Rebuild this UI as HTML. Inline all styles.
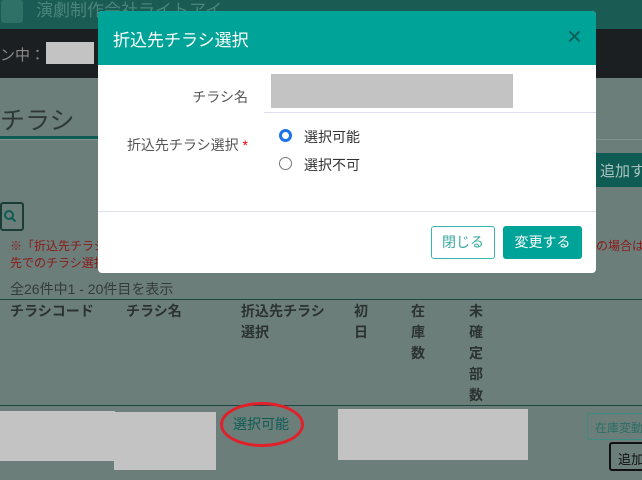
<!DOCTYPE html>
<html><head><meta charset="utf-8"><style>
*{margin:0;padding:0;box-sizing:border-box}
body{width:642px;height:480px;overflow:hidden;position:relative;background:#6b7e79;font-family:"Liberation Sans","Noto Sans CJK JP",sans-serif;color:#2b3230}
.a{position:absolute;white-space:nowrap}
.g{background:#c3c3c3;position:absolute}
</style></head><body>
<div class="a" style="left:0;top:0;width:642px;height:29px;background:#1a5b53"></div>
<div class="a" style="left:1px;top:0;width:22px;height:23px;background:#2f7067;border-radius:3px"></div>
<div class="a" style="left:36px;top:-4px;font-size:17px;color:#4a857c">演劇制作会社ライトアイ</div>
<div class="a" style="left:0;top:29px;width:642px;height:49px;background:#1b1f21"></div>
<div class="a" style="left:0;top:44px;font-size:15px;color:#8a8a8a">ン中：[</div>
<div class="g" style="left:46px;top:42px;width:48px;height:22px"></div>
<div class="a" style="left:0;top:101px;font-size:25px;color:#2f3a37">チラシ</div>
<div class="a" style="left:0;top:136px;width:100px;height:3px;background:#0f5c55"></div>
<div class="a" style="left:0;top:139px;width:642px;height:1px;background:#7e958f"></div>
<div class="a" style="left:0;top:202px;width:24px;height:29px;border:2px solid #1c3c37;border-radius:3px"></div>
<svg class="a" style="left:3px;top:209px" width="14" height="14" viewBox="0 0 14 14"><circle cx="6" cy="6" r="4" fill="none" stroke="#0f5c55" stroke-width="2"/><line x1="9" y1="9" x2="12.5" y2="12.5" stroke="#0f5c55" stroke-width="2"/></svg>
<div class="a" style="left:596px;top:153px;width:46px;height:34px;background:#0f5c55;font-size:15px;padding:7px 4px;color:#a8c4bf">追加す</div>
<div class="a" style="left:10px;top:237px;font-size:12px;color:#8a1a1a">※「折込先チラシ</div>
<div class="a" style="left:10px;top:254px;font-size:12px;color:#8a1a1a">先でのチラシ選択</div>
<div class="a" style="left:596px;top:237px;font-size:12px;color:#8a1a1a">の場合は折</div>
<div class="a" style="left:10px;top:279px;font-size:14px;color:#333c39">全26件中1 - 20件目を表示</div>
<div class="a" style="left:0;top:299px;width:642px;height:1px;background:#1d4640"></div>
<div class="a" style="left:10px;top:301px;font-size:14px;font-weight:bold;line-height:21px">チラシコード</div>
<div class="a" style="left:126px;top:301px;font-size:14px;font-weight:bold;line-height:21px">チラシ名</div>
<div class="a" style="left:241px;top:301px;font-size:14px;font-weight:bold;line-height:21px">折込先チラシ<br>選択</div>
<div class="a" style="left:354px;top:301px;font-size:14px;font-weight:bold;line-height:21px">初<br>日</div>
<div class="a" style="left:411px;top:301px;font-size:14px;font-weight:bold;line-height:21px">在<br>庫<br>数</div>
<div class="a" style="left:469px;top:301px;font-size:14px;font-weight:bold;line-height:21px">未<br>確<br>定<br>部<br>数</div>
<div class="a" style="left:0;top:405px;width:642px;height:1px;background:#1d4640"></div>
<div class="g" style="left:0;top:411px;width:115px;height:50px"></div>
<div class="g" style="left:114px;top:412px;width:102px;height:58px"></div>
<div class="g" style="left:338px;top:409px;width:190px;height:51px"></div>
<div class="a" style="left:233px;top:414px;font-size:14px;color:#0f5c55">選択可能</div>
<div class="a" style="left:220px;top:402px;width:84px;height:45px;border:3px solid #e0202a;border-radius:50%"></div>
<div class="a" style="left:587px;top:413px;width:60px;height:27px;border:1px solid #3c8c82;border-radius:3px;font-size:12px;color:#2e6e66;padding:5px 7px">在庫変動</div>
<div class="a" style="left:609px;top:442px;width:40px;height:29px;border:2px solid #111;border-radius:3px;font-size:13px;padding:5px 7px;color:#111">追加</div>

<div class="a" style="left:98px;top:11px;width:498px;height:262px;background:#fff;border-radius:4px;overflow:hidden">
 <div style="height:54px;background:#00a398;color:#fff;font-size:17px;padding:15px 15px">折込先チラシ選択</div>
 <div class="a" style="right:14px;top:10px;font-size:26px;color:#0e5e57;font-weight:300">×</div>
 <div class="a" style="top:76px;right:348px;font-size:14px;color:#555">チラシ名</div>
 <div class="g" style="left:173px;top:63px;width:242px;height:34px"></div>
 <div class="a" style="left:166px;top:101px;width:332px;height:1px;background:#dde"></div>
 <div class="a" style="top:124px;right:348px;font-size:14px;color:#555">折込先チラシ選択 <span style="color:#e00">*</span></div>
 <div class="a" style="left:181px;top:118px;width:13px;height:13px;border-radius:50%;border:3.5px solid #1a73e8"></div>
 <div class="a" style="left:206px;top:116px;font-size:14px;color:#333">選択可能</div>
 <div class="a" style="left:181px;top:146px;width:13px;height:13px;border-radius:50%;border:1px solid #777"></div>
 <div class="a" style="left:206px;top:144px;font-size:14px;color:#333">選択不可</div>
 <div class="a" style="left:0;top:200px;width:498px;height:1px;background:#dde"></div>
 <div class="a" style="left:333px;top:215px;width:64px;height:33px;border:1px solid #3bb8ad;border-radius:3px;color:#38a99f;font-size:14px;text-align:center;line-height:31px">閉じる</div>
 <div class="a" style="left:405px;top:215px;width:79px;height:33px;background:#00a398;border-radius:3px;color:#fff;font-size:14px;text-align:center;line-height:33px">変更する</div>
</div>
</body></html>
